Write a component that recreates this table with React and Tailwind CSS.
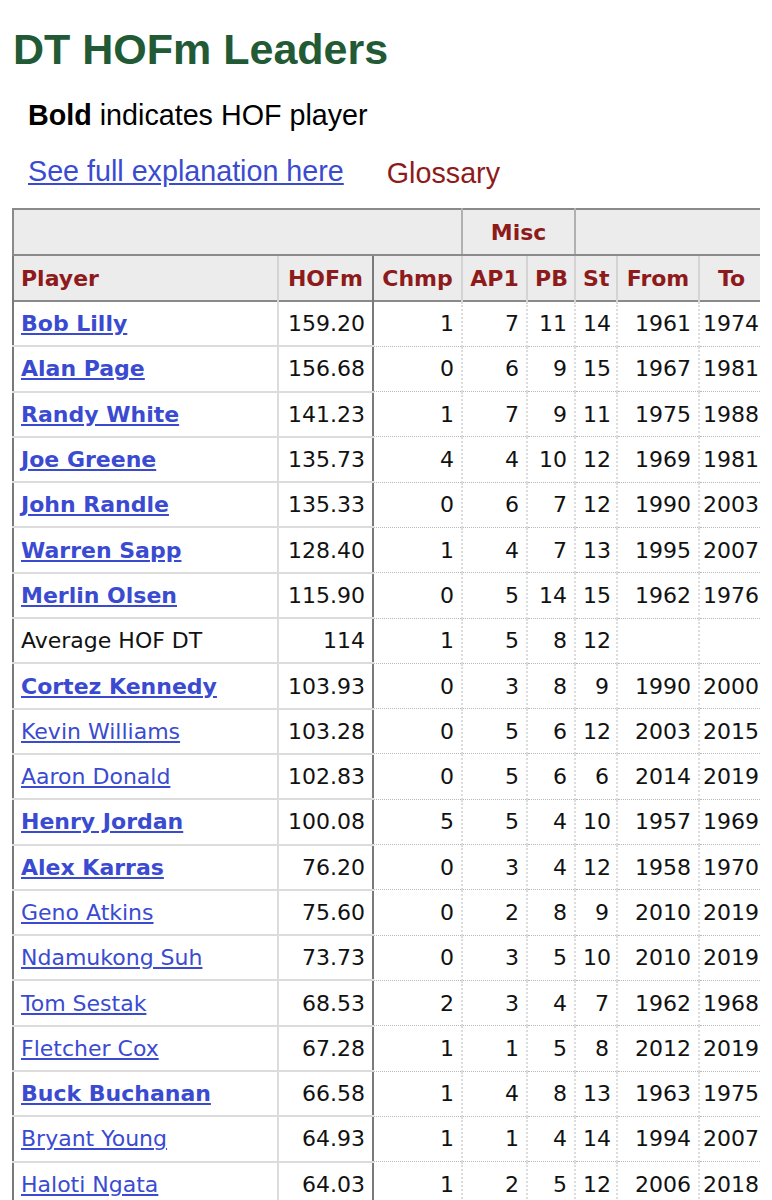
import React from "react";

const rows = [
  ["Bob Lilly", true, "159.20", 1, 7, 11, 14, 1961, 1974],
  ["Alan Page", true, "156.68", 0, 6, 9, 15, 1967, 1981],
  ["Randy White", true, "141.23", 1, 7, 9, 11, 1975, 1988],
  ["Joe Greene", true, "135.73", 4, 4, 10, 12, 1969, 1981],
  ["John Randle", true, "135.33", 0, 6, 7, 12, 1990, 2003],
  ["Warren Sapp", true, "128.40", 1, 4, 7, 13, 1995, 2007],
  ["Merlin Olsen", true, "115.90", 0, 5, 14, 15, 1962, 1976],
  ["Average HOF DT", null, "114", 1, 5, 8, 12, "", ""],
  ["Cortez Kennedy", true, "103.93", 0, 3, 8, 9, 1990, 2000],
  ["Kevin Williams", false, "103.28", 0, 5, 6, 12, 2003, 2015],
  ["Aaron Donald", false, "102.83", 0, 5, 6, 6, 2014, 2019],
  ["Henry Jordan", true, "100.08", 5, 5, 4, 10, 1957, 1969],
  ["Alex Karras", true, "76.20", 0, 3, 4, 12, 1958, 1970],
  ["Geno Atkins", false, "75.60", 0, 2, 8, 9, 2010, 2019],
  ["Ndamukong Suh", false, "73.73", 0, 3, 5, 10, 2010, 2019],
  ["Tom Sestak", false, "68.53", 2, 3, 4, 7, 1962, 1968],
  ["Fletcher Cox", false, "67.28", 1, 1, 5, 8, 2012, 2019],
  ["Buck Buchanan", true, "66.58", 1, 4, 8, 13, 1963, 1975],
  ["Bryant Young", false, "64.93", 1, 1, 4, 14, 1994, 2007],
  ["Haloti Ngata", false, "64.03", 1, 2, 5, 12, 2006, 2018],
];

const th = "px-[7px] font-bold text-[#8e1b1b] text-center align-middle border-x-2 border-[#d4d4d4]";
const stat = "text-right align-middle border-x-2 border-x-[#dcdcdc] border-b border-b-[#b8b8b8] border-dotted";

export default function App() {
  return (
    <div className="w-[772px] min-h-[1200px] bg-white overflow-hidden font-['Liberation_Sans',Arial,sans-serif]">
      <h1 className="ml-[13px] pt-[24px] text-[43px] leading-[50px] font-bold text-[#215a34]">
        DT HOFm Leaders
      </h1>
      <p className="ml-[28px] mt-[24px] text-[28.7px] leading-[34px] text-black">
        <b>Bold</b> indicates HOF player
      </p>
      <div className="ml-[28px] mt-[22px] flex items-start gap-[43px] text-[28.7px] leading-[34px]">
        <a href="#" className="text-[#3a4bd1] underline">See full explanation here</a>
        <span className="pt-[2px] text-[#8e1b1b]">Glossary</span>
      </div>

      {/* table runs to the right edge like the screenshot */}
      <div className="ml-[12px] mt-[18px] w-[748px] overflow-hidden">
        <table className="table-fixed border-collapse w-[748px] text-[22px] text-[#111] font-['DejaVu_Sans',Verdana,sans-serif]">
          <colgroup>
            <col className="w-[265px]" />
            <col className="w-[95px]" />
            <col className="w-[89px]" />
            <col className="w-[65px]" />
            <col className="w-[48px]" />
            <col className="w-[42px]" />
            <col className="w-[82px]" />
            <col className="w-[62px]" />
          </colgroup>
          <thead>
            <tr className="h-[46px] bg-[#ececec]">
              <th colSpan={3} className="border-2 border-[#8a8a8a] border-r-[#b0b0b0]"></th>
              <th colSpan={2} className="text-center font-bold text-[#8e1b1b] border-y-2 border-[#8a8a8a] border-x-2 border-x-[#b0b0b0]">
                Misc
              </th>
              <th colSpan={3} className="border-y-2 border-[#8a8a8a] border-l-2 border-l-[#b0b0b0]"></th>
            </tr>
            <tr className="h-[46px] bg-[#ececec] border-b-2 border-[#8a8a8a]">
              <th className={th + " text-left border-l-2 border-l-[#7a7a7a]"}>Player</th>
              <th className={th + " border-r-2 border-r-[#7a7a7a]"}>HOFm</th>
              <th className={th}>Chmp</th>
              <th className={th}>AP1</th>
              <th className={th}>PB</th>
              <th className={th}>St</th>
              <th className={th}>From</th>
              <th className="pl-[2px] font-bold text-[#8e1b1b] text-center align-middle border-l-2 border-[#d4d4d4]">To</th>
            </tr>
          </thead>
          <tbody>
            {rows.map((r) => (
              <tr key={r[0]} className="h-[45.3px] bg-white">
                <td className="px-[7px] align-middle whitespace-nowrap border-l-2 border-l-[#7a7a7a] border-r-2 border-r-[#dcdcdc] border-b-2 border-b-[#dcdcdc]">
                  {r[1] === null ? (
                    <span>{r[0]}</span>
                  ) : (
                    <a href="#" className={"text-[#3a4bd1] underline " + (r[1] ? "font-bold" : "")}>
                      {r[0]}
                    </a>
                  )}
                </td>
                <td className="px-[7px] text-right align-middle border-r-2 border-r-[#7a7a7a] border-b-2 border-b-[#dcdcdc]">
                  {r[2]}
                </td>
                {r.slice(3).map((v, i) => (
                  <td key={i} className={stat + (i === 5 ? " pl-[2px] pr-[1px]" : " px-[7px]")}>
                    {v}
                  </td>
                ))}
              </tr>
            ))}
          </tbody>
        </table>
      </div>
    </div>
  );
}
